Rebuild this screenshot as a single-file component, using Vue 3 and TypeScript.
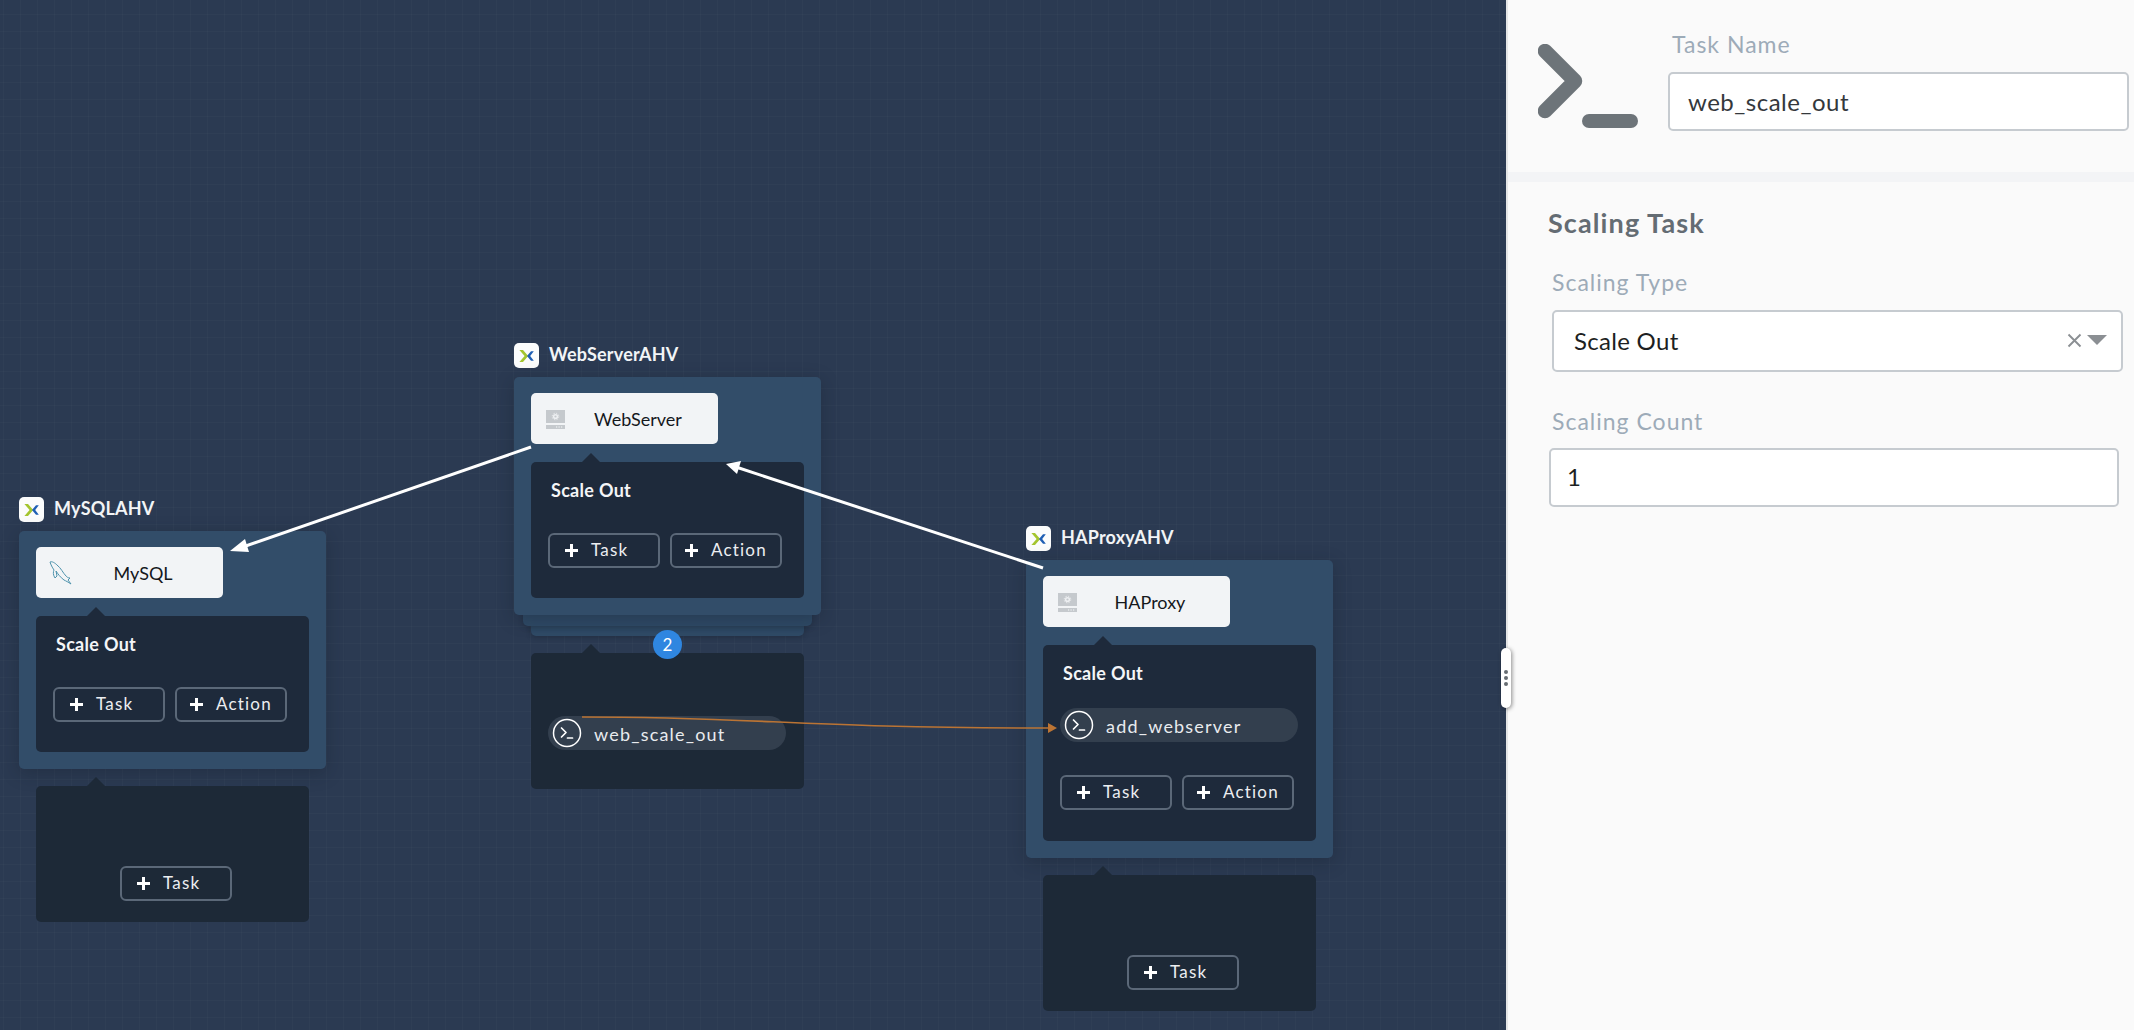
<template>
  <div class="page">
    <!-- Blueprint canvas -->
    <div class="canvas">
      <div
        v-for="node in nodes"
        :key="node.title"
        class="node"
        :style="{ left: node.x + 'px', top: node.y + 'px' }"
      >
        <div class="node-head">
          <span class="logo">
            <svg width="16" height="12" viewBox="0 0 19 15">
              <polygon points="0,0 4.5,0 11,7.5 4.5,15 0,15 6.5,7.5" fill="#a4c52f" />
              <polygon points="18,1.5 14.5,1.5 9.5,7.5 14.5,13.5 18,13.5 13.5,7.5" fill="#1f5fb4" />
            </svg>
          </span>
          <span class="node-title">{{ node.title }}</span>
        </div>

        <div class="card-wrap" :class="{ stacked: node.replicas }">
          <template v-if="node.replicas">
            <div class="layer layer-3"></div>
            <div class="layer layer-2"></div>
            <span class="replica-badge">{{ node.replicas }}</span>
          </template>
          <div class="card">
            <div class="chip">
              <!-- MySQL dolphin -->
              <svg v-if="node.icon === 'mysql'" class="chip-icon dolphin" width="23" height="24" viewBox="0 0 23 24" fill="none">
                <path
                  d="M1 1 C3 0 6 2 8 4 C12 7 14 12 17 15 C18 16 19 17 21 17 L19 19 L22 23 C19 21 17 20 15 19 C11 16 9 13 7 10 L8 15 L6 17 C4 14 4 11 5 9 C3 6 2 4 1 1 Z"
                  stroke="#4e93ad"
                  stroke-width="1"
                />
              </svg>
              <!-- Server with gear -->
              <svg v-else class="chip-icon" width="20" height="20" viewBox="0 0 20 20">
                <rect x="0" y="0" width="19" height="13" fill="#c5c9cd" />
                <circle cx="9.5" cy="6.5" r="2.6" fill="#eef0f2" />
                <circle cx="9.5" cy="6.5" r="3.3" fill="none" stroke="#eef0f2" stroke-width="1" stroke-dasharray="1.3 1.3" />
                <circle cx="9.5" cy="6.5" r="1.1" fill="#c5c9cd" />
                <rect x="0" y="15" width="19" height="4" fill="#c5c9cd" />
                <rect x="10" y="16.4" width="1.2" height="1.2" fill="#eef0f2" />
                <rect x="12.5" y="16.4" width="1.2" height="1.2" fill="#eef0f2" />
                <rect x="15" y="16.4" width="1.2" height="1.2" fill="#eef0f2" />
              </svg>
              <span>{{ node.service }}</span>
            </div>

            <div class="panel">
              <div class="panel-title">Scale Out</div>
              <div v-if="node.scaleTask" class="task-pill">
                <svg class="task-icon" width="30" height="30" viewBox="0 0 30 30" fill="none">
                  <circle cx="15" cy="15" r="13.5" stroke="#fff" stroke-width="1.5" />
                  <path d="M9.5 10 L14 14.5 L9.5 19" stroke="#fff" stroke-width="1.7" stroke-linejoin="round" stroke-linecap="round" />
                  <path d="M15.5 20 H20.5" stroke="#fff" stroke-width="1.7" stroke-linecap="round" />
                </svg>
                <span>{{ node.scaleTask }}</span>
              </div>
              <div class="panel-actions" :class="{ 'after-pill': node.scaleTask }">
                <button class="add-btn"><span class="plus"></span>Task</button>
                <button class="add-btn action"><span class="plus"></span>Action</button>
              </div>
            </div>
          </div>
        </div>

        <div class="panel lower">
          <div class="panel-title"></div>
          <div v-if="node.lowerTask" class="task-pill">
            <svg class="task-icon" width="30" height="30" viewBox="0 0 30 30" fill="none">
              <circle cx="15" cy="15" r="13.5" stroke="#fff" stroke-width="1.5" />
              <path d="M9.5 10 L14 14.5 L9.5 19" stroke="#fff" stroke-width="1.7" stroke-linejoin="round" stroke-linecap="round" />
              <path d="M15.5 20 H20.5" stroke="#fff" stroke-width="1.7" stroke-linecap="round" />
            </svg>
            <span>{{ node.lowerTask }}</span>
          </div>
          <div v-else class="lower-actions">
            <button class="add-btn"><span class="plus"></span>Task</button>
          </div>
        </div>
      </div>

      <!-- Connections between services and tasks -->
      <svg class="wires" width="1506" height="1030" viewBox="0 0 1506 1030" fill="none">
        <path d="M531 447 L240 548" stroke="#fff" stroke-width="3" />
        <polygon points="230,551 245,539 249,552" fill="#fff" />
        <path d="M1043 568 L736 467" stroke="#fff" stroke-width="3" />
        <polygon points="726,464 741,461 737,474" fill="#fff" />
        <path d="M582 717 C760 717 800 728 1048 728" stroke="#bb7434" stroke-width="1.6" />
        <polygon points="1057,728 1048,723 1048,733" fill="#bb7434" />
      </svg>
    </div>

    <!-- Task editor -->
    <aside class="editor">
      <span class="handle"><i></i><i></i><i></i></span>
      <div class="editor-head">
        <svg class="terminal" width="100" height="84" viewBox="0 0 100 84" fill="none">
          <path d="M7 7 L37 37 L7 67" stroke="#6d7479" stroke-width="14.5" stroke-linecap="round" stroke-linejoin="round" />
          <rect x="44" y="70" width="56" height="14" rx="7" fill="#6d7479" />
        </svg>
        <div class="name-field">
          <label class="field-label">Task Name</label>
          <div class="text-box">web_scale_out</div>
        </div>
      </div>

      <div class="editor-body">
        <h3 class="section-title">Scaling Task</h3>
        <div class="field field-type">
          <label class="field-label">Scaling Type</label>
          <div class="text-box select-box">
            <span>Scale Out</span>
            <span class="select-tools">
              <svg width="15" height="15" viewBox="0 0 15 15"><path d="M1.5 1.5 L13.5 13.5 M13.5 1.5 L1.5 13.5" stroke="#8b8f93" stroke-width="1.9" /></svg>
              <span class="caret"></span>
            </span>
          </div>
        </div>
        <div class="field field-count">
          <label class="field-label">Scaling Count</label>
          <div class="text-box count-box">1</div>
        </div>
      </div>
    </aside>
  </div>
</template>

<script setup lang="ts">
interface BlueprintNode {
  title: string
  service: string
  icon: 'mysql' | 'server'
  x: number
  y: number
  replicas?: number
  scaleTask?: string
  lowerTask?: string
}

const nodes: BlueprintNode[] = [
  { title: 'MySQLAHV', service: 'MySQL', icon: 'mysql', x: 19, y: 497 },
  {
    title: 'WebServerAHV',
    service: 'WebServer',
    icon: 'server',
    x: 514,
    y: 343,
    replicas: 2,
    lowerTask: 'web_scale_out'
  },
  {
    title: 'HAProxyAHV',
    service: 'HAProxy',
    icon: 'server',
    x: 1026,
    y: 526,
    scaleTask: 'add_webserver'
  }
]
</script>

<style>
html,
body {
  margin: 0;
  overflow: hidden;
}
</style>

<style scoped>
.page {
  display: flex;
  width: 2134px;
  height: 1030px;
  overflow: hidden;
  font-family: Lato, "Liberation Sans", sans-serif;
}

.canvas {
  position: relative;
  flex: 0 0 1506px;
  background-color: #2b3a52;
  background-image:
    linear-gradient(to right, rgba(255, 255, 255, 0.018) 1px, transparent 1px),
    linear-gradient(to bottom, rgba(255, 255, 255, 0.018) 1px, transparent 1px);
  background-size: 17px 17px;
  background-position: 3px 14px;
}

.wires {
  position: absolute;
  left: 0;
  top: 0;
  pointer-events: none;
}

.node {
  position: absolute;
  width: 307px;
}

.node-head {
  display: flex;
  align-items: center;
  gap: 10px;
  height: 25px;
  margin-bottom: 9px;
}

.logo {
  display: flex;
  align-items: center;
  justify-content: center;
  width: 25px;
  height: 25px;
  border-radius: 5px;
  background: #fbfcfc;
}

.node-title {
  padding-bottom: 3px;
  color: #f2f4f6;
  font-size: 18px;
  font-weight: 700;
  letter-spacing: 0.2px;
}

.card-wrap {
  position: relative;
}

.card-wrap.stacked {
  padding-bottom: 21px;
}

.card {
  position: relative;
  padding: 16px 17px 17px;
  border-radius: 5px;
  background: #324d69;
  box-shadow: 0 4px 18px rgba(20, 28, 40, 0.32);
}

.layer {
  position: absolute;
  border-radius: 0 0 5px 5px;
  box-shadow: 0 2px 5px rgba(20, 28, 40, 0.28);
}

.layer-2 {
  left: 9px;
  right: 9px;
  bottom: 10px;
  height: 30px;
  background: #2f4a66;
}

.layer-3 {
  left: 17px;
  right: 17px;
  bottom: 0;
  height: 30px;
  background: #2f4a66;
}

.replica-badge {
  position: absolute;
  z-index: 2;
  left: 139px;
  bottom: -23px;
  width: 29px;
  height: 29px;
  border-radius: 50%;
  background: #2f86e0;
  color: #fff;
  font-size: 17px;
  line-height: 29px;
  text-align: center;
}

.chip {
  position: relative;
  box-sizing: border-box;
  display: flex;
  align-items: center;
  justify-content: center;
  width: 187px;
  height: 51px;
  padding-left: 27px;
  margin-bottom: 18px;
  border-radius: 5px;
  background: #f2f4f6;
  color: #15181c;
  font-size: 18px;
}

.chip-icon {
  position: absolute;
  left: 15px;
  top: 17px;
}

.chip-icon.dolphin {
  left: 13px;
  top: 14px;
}

.panel {
  position: relative;
  box-sizing: border-box;
  width: 273px;
  padding: 0 17px;
  border-radius: 5px;
  background: #1e2a3b;
}

.panel::before {
  content: "";
  position: absolute;
  left: 51px;
  top: -9px;
  border-left: 9px solid transparent;
  border-right: 9px solid transparent;
  border-bottom: 9px solid #1e2a3b;
}

.panel.lower {
  min-height: 136px;
  margin-top: 17px;
  margin-left: 17px;
  background: #1d2937;
}

.panel.lower::before {
  border-bottom-color: #1d2937;
}

.panel-title {
  height: 56px;
  padding-left: 3px;
  color: #f4f5f7;
  font-size: 18px;
  font-weight: 700;
  letter-spacing: 0.3px;
  line-height: 56px;
}

.panel-actions {
  display: flex;
  gap: 10px;
  margin-top: 15px;
  padding-bottom: 30px;
}

.panel-actions.after-pill {
  margin-top: 33px;
  padding-bottom: 31px;
}

.lower-actions {
  margin-top: 24px;
  padding-bottom: 21px;
  padding-left: 67px;
}

.add-btn {
  box-sizing: border-box;
  display: flex;
  align-items: center;
  width: 112px;
  height: 35px;
  padding: 0 0 2px 15px;
  border: 2px solid #5b6878;
  border-radius: 6px;
  background: transparent;
  color: #eceef1;
  font-family: inherit;
  font-size: 17px;
  letter-spacing: 1.2px;
}

.add-btn.action {
  padding-left: 13px;
}

.plus {
  position: relative;
  width: 13px;
  height: 13px;
  margin-top: 2px;
  margin-right: 13px;
}

.plus::before,
.plus::after {
  content: "";
  position: absolute;
  background: #fff;
}

.plus::before {
  left: 0;
  right: 0;
  top: 5px;
  height: 3px;
}

.plus::after {
  top: 0;
  bottom: 0;
  left: 5px;
  width: 3px;
}

.task-pill {
  display: flex;
  align-items: center;
  box-sizing: border-box;
  width: 238px;
  height: 34px;
  margin-top: 7px;
  padding-left: 4px;
  border-radius: 17px;
  background: #333f4e;
  color: #e9ebee;
  font-size: 18px;
  letter-spacing: 1.2px;
}

.task-pill span {
  margin-left: 12px;
  padding-top: 1px;
}

.task-icon {
  flex: none;
}

.panel.lower .task-pill {
  margin-bottom: 39px;
}

/* Editor side */
.editor {
  position: relative;
  box-sizing: border-box;
  flex: 1;
  border-left: 2px solid #e4e5e6;
  background: #fafafa;
}

.handle {
  position: absolute;
  z-index: 3;
  left: -7px;
  top: 648px;
  box-sizing: border-box;
  display: flex;
  flex-direction: column;
  justify-content: center;
  align-items: center;
  gap: 2px;
  width: 10px;
  height: 60px;
  border-radius: 5px;
  background: #fff;
  box-shadow: 1px 1px 4px rgba(0, 0, 0, 0.45);
}

.handle i {
  width: 4px;
  height: 4px;
  border-radius: 50%;
  background: #666c72;
}

.editor-head {
  box-sizing: border-box;
  display: flex;
  height: 182px;
  padding: 32px 0 0 30px;
  border-bottom: 10px solid #f3f4f6;
}

.terminal {
  flex: none;
  margin-top: 12px;
  margin-right: 30px;
}

.name-field {
  width: 461px;
}

.field-label {
  display: block;
  padding-left: 4px;
  color: #9dabb8;
  font-size: 23px;
  letter-spacing: 1px;
  line-height: 24px;
}

.text-box {
  box-sizing: border-box;
  height: 59px;
  margin-top: 16px;
  padding-left: 18px;
  border: 2px solid #c6cbd0;
  border-radius: 5px;
  background: #fff;
  color: #34383c;
  font-size: 24px;
  letter-spacing: 0.5px;
  line-height: 55px;
}

.editor-body {
  padding-left: 40px;
}

.section-title {
  margin: 27px 0 0;
  color: #646c73;
  font-size: 27px;
  font-weight: 700;
  letter-spacing: 1.1px;
  line-height: 28px;
}

.field-type {
  margin-top: 33px;
  margin-left: 4px;
  width: 571px;
}

.field-type .field-label,
.field-count .field-label {
  padding-left: 0;
}

.select-box {
  display: flex;
  justify-content: space-between;
  align-items: center;
  height: 62px;
  padding-left: 20px;
  padding-right: 14px;
  padding-bottom: 2px;
  color: #1d1f22;
  letter-spacing: 0.3px;
}

.select-tools {
  display: flex;
  align-items: center;
  gap: 5px;
}

.caret {
  width: 0;
  height: 0;
  border-left: 10px solid transparent;
  border-right: 10px solid transparent;
  border-top: 10px solid #8b8f93;
}

.field-count {
  margin-top: 37px;
  margin-left: 1px;
  width: 570px;
}

.field-count .field-label {
  padding-left: 3px;
}

.count-box {
  margin-top: 15px;
  padding-left: 16px;
  line-height: 53px;
  color: #1d1f22;
}
</style>
